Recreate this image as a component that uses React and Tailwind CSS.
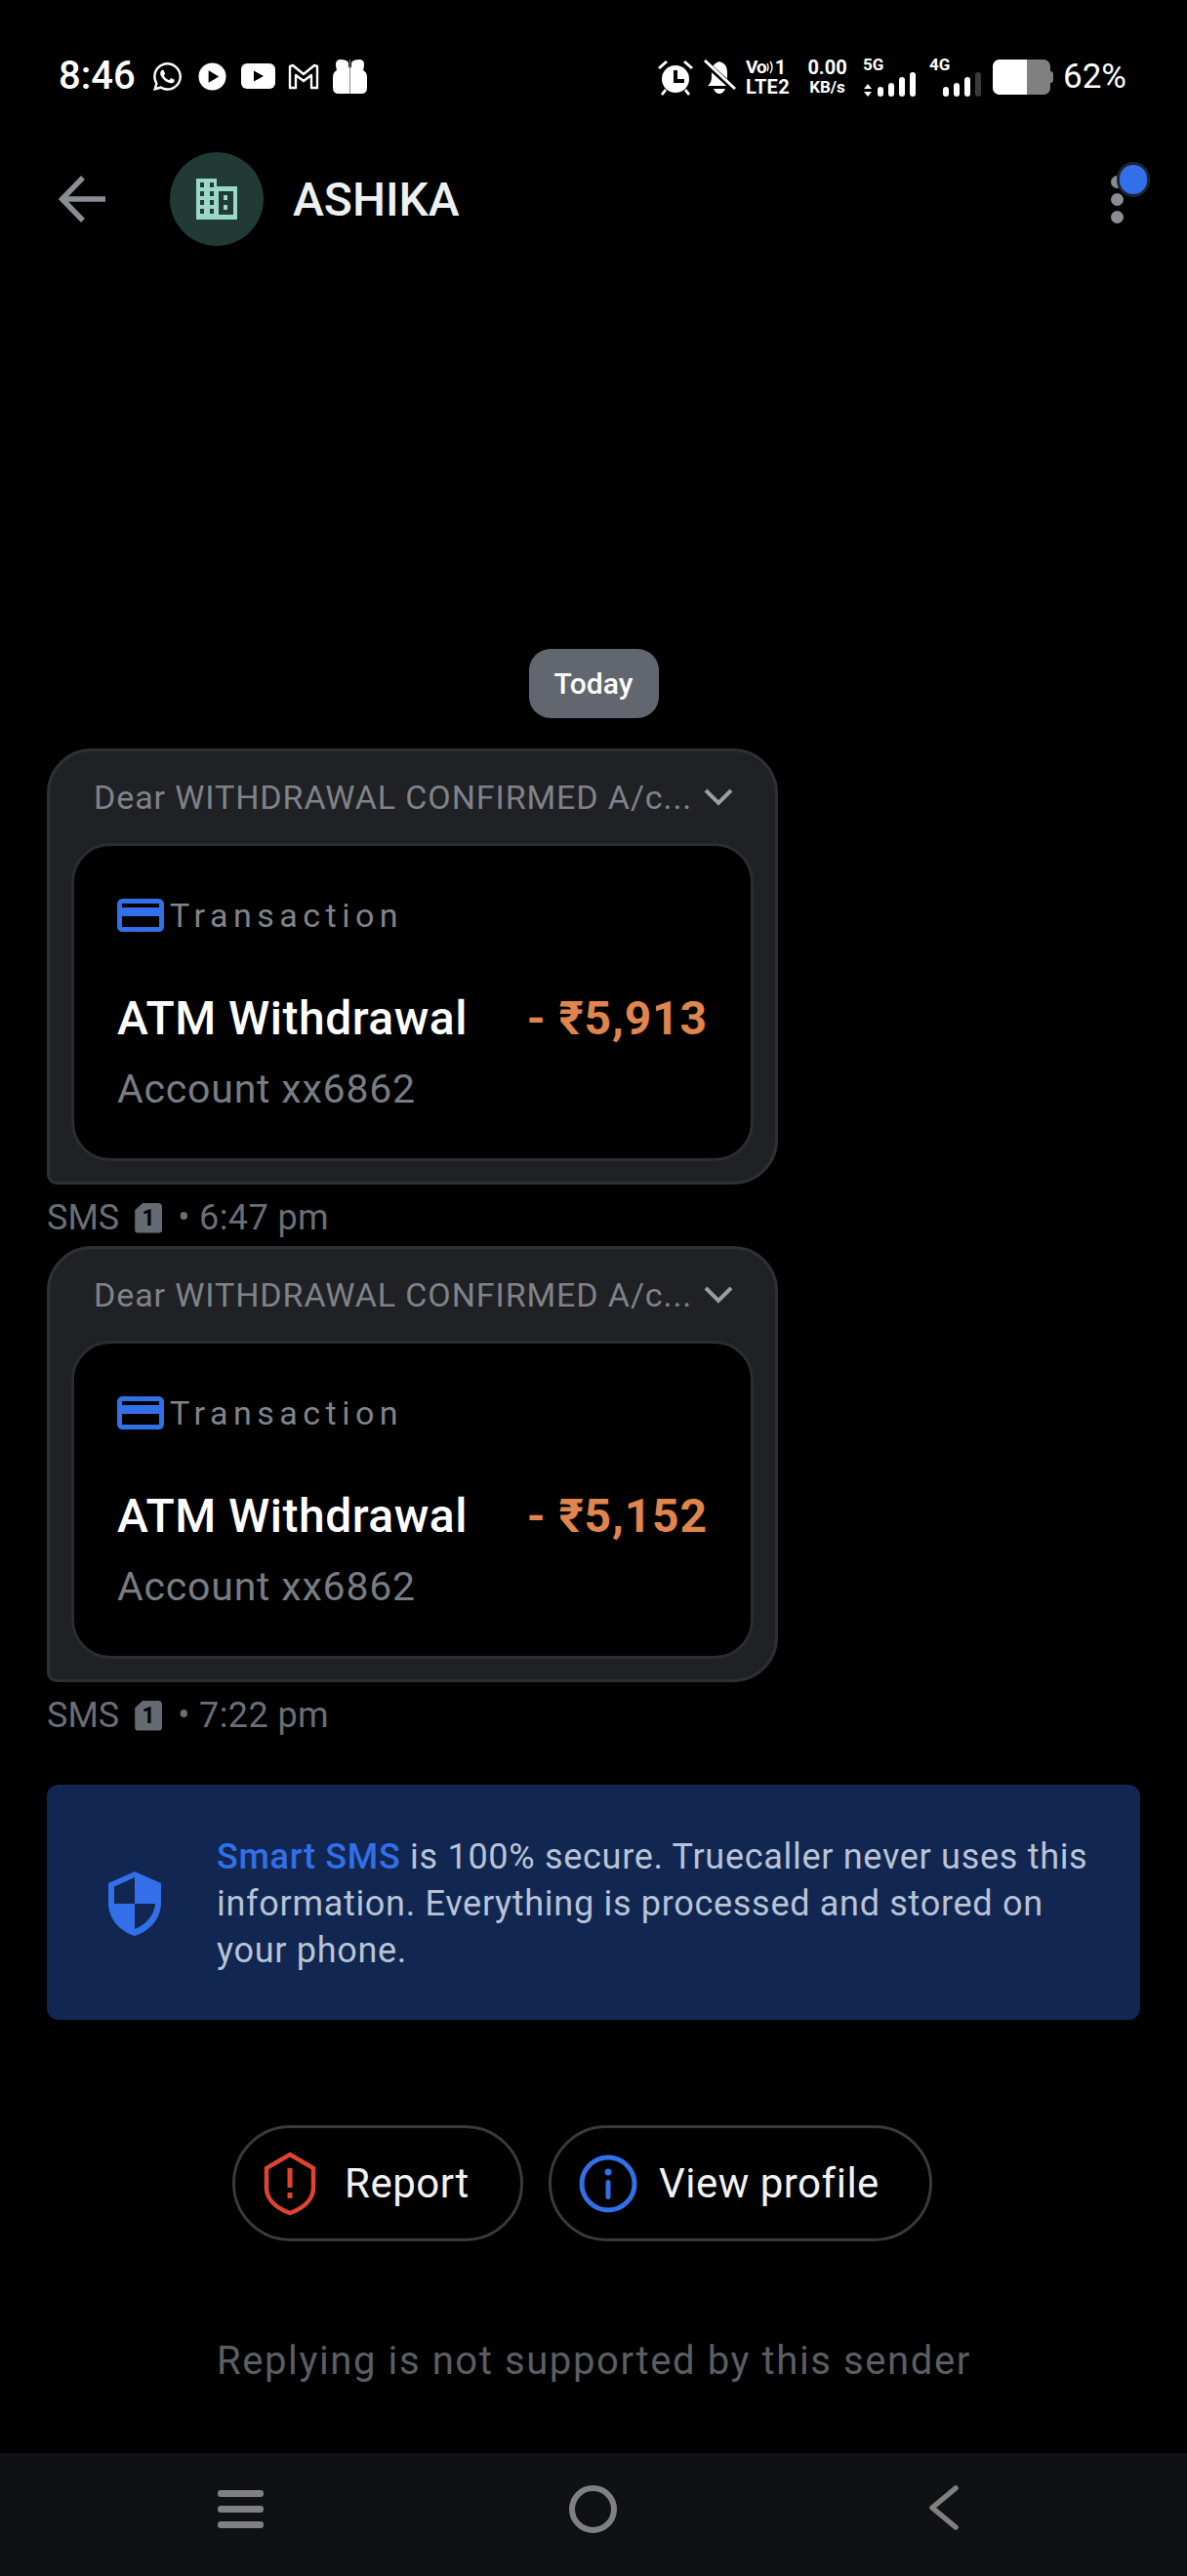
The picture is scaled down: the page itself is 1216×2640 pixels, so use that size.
import { FaWhatsapp } from 'react-icons/fa';

const font = { fontFamily: 'Roboto, sans-serif' };

function SignalBars({ dimLast }) {
  const bars = [10, 14, 20, 25];
  return (
    <div className="flex items-end gap-[5px]">
      {bars.map((h, i) => (
        <div
          key={i}
          className={`w-[6px] rounded-full ${dimLast && i === 3 ? 'bg-[#3a3a3a]' : 'bg-white'}`}
          style={{ height: h }}
        />
      ))}
    </div>
  );
}

function StatusBar() {
  return (
    <div className="h-[154px] flex items-start justify-between pl-[60px] pr-[62px] pt-[55px] text-white">
      <div className="flex items-center h-[46px]">
        <span className="text-[40px] leading-[46px] font-medium">8:46</span>
        <div className="flex items-center ml-[16px]">
          <FaWhatsapp className="text-[33px]" />
          <svg className="ml-[15px]" width="29" height="29" viewBox="0 0 30 30">
            <circle cx="15" cy="15" r="14.5" fill="#fff" />
            <path d="M11 8.500v13l11-6.500z" fill="#000" />
          </svg>
          <svg className="ml-[15px]" width="35" height="26" viewBox="0 0 35 26">
            <rect width="35" height="26" rx="6" fill="#fff" />
            <path d="M13 7.500v11l10-5.500z" fill="#000" />
          </svg>
          <svg className="ml-[13px]" width="32" height="27" viewBox="0 0 32 27" fill="none" stroke="#fff" strokeWidth="2.400" strokeLinejoin="round">
            <path d="M2 25V3l3-1 11 9L27 2l3 1v22h-6V12l-8 6-8-6v13z" />
          </svg>
          <svg className="ml-[14px]" width="35" height="35" viewBox="0 0 35 35">
            <path
              fill="#fff"
              d="M3 5q0-5 5-5 6 0 8 3v4l1 2v26H6q-6 0-6-6V18q0-5 4-7-1-3-1-6zM32 5q0-5-5-5-6 0-8 3v4l-1 2v26h11q6 0 6-6V18q0-5-4-7 1-3 1-6z"
            />
            <rect x="17" y="0" width="1" height="35" fill="#8a8a8a" />
          </svg>
        </div>
      </div>
      <div className="flex items-center h-[40px] mt-[4px]">
        <svg width="38" height="38" viewBox="0 0 38 38" fill="#fff">
          <circle cx="19" cy="21" r="14" />
          <path d="M17 12h4v9h7v4H17z" fill="#000" />
          <path d="m1 9 8-7 2 2-8 7zM37 9l-8-7-2 2 8 7zM4 36l4-5 2 2-4 5zM34 36l-4-5-2 2 4 5z" />
        </svg>
        <svg className="ml-[9px]" width="34" height="36" viewBox="0 0 34 36" fill="#fff">
          <path d="M5 27q4-3 4-9V13q0-9 8-11 8 2 8 11v5q0 6 5 9zM11 30h12q-2 5-6 5t-6-5z" />
          <path d="M0 1 33 31" stroke="#000" strokeWidth="6" />
          <path d="M2 1 33 30" stroke="#fff" strokeWidth="3" />
        </svg>
        <div className="ml-[10px] w-[44px] flex flex-col items-start font-bold">
          <div className="flex items-center h-[20px]">
            <span className="text-[19px] leading-[20px] tracking-[-1px]">Vo</span>
            <svg width="8" height="14" viewBox="0 0 8 14" fill="none" stroke="#fff" strokeWidth="1.400">
              <path d="M1 3q2 4 0 8M4 1q4 6 0 12" />
            </svg>
            <span className="ml-[1px] text-[20px] leading-[20px]">1</span>
          </div>
          <span className="text-[20px] leading-[20px] tracking-[0.3px]">LTE2</span>
        </div>
        <div className="ml-[18px] w-[43px] flex flex-col items-center font-bold">
          <span className="text-[20px] leading-[20px]">0.00</span>
          <span className="text-[17px] leading-[20px]">KB/s</span>
        </div>
        <div className="ml-[15px] w-[53px] flex flex-col items-start">
          <span className="text-[17px] leading-[15px] font-bold">5G</span>
          <div className="flex items-end gap-[5px] h-[25px]">
            <svg width="10" height="13" viewBox="0 0 10 13" fill="#fff">
              <path d="M5 0l4 5H1zM5 13l4-5H1z" />
            </svg>
            <SignalBars />
          </div>
        </div>
        <div className="ml-[15px] w-[53px] flex flex-col items-start">
          <span className="text-[17px] leading-[15px] font-bold">4G</span>
          <div className="pl-[14px]">
            <SignalBars dimLast />
          </div>
        </div>
        <div className="ml-[12px] flex items-center">
          <div className="w-[59px] h-[36px] rounded-[7px] overflow-hidden flex bg-[#808080]">
            <div className="w-[35px] bg-white" />
          </div>
          <div className="w-[3px] h-[12px] bg-[#808080] rounded-r-sm" />
        </div>
        <span className="ml-[10px] text-[35px] leading-[40px]">62%</span>
      </div>
    </div>
  );
}

function Header() {
  return (
    <div className="h-[100px] flex items-center pl-[60px] pr-[65px] relative">
      <svg width="48" height="48" viewBox="0 0 48 48" fill="none" stroke="#8a8d93" strokeWidth="5.500">
        <path d="M48 24H4M25 2 3.500 24 25 46" />
      </svg>
      <div className="ml-[66px] w-[96px] h-[96px] rounded-full bg-[#223a36] flex items-center justify-center">
        <svg width="42" height="42" viewBox="0 0 42 42">
          <path
            fill="#9bd8c9"
            fillRule="evenodd"
            d="M0 0h21v8h21v34H0zM4 4v5h4V4zm10 0v5h4V4zM4 13v5h4v-5zm10 0v5h4v-5zM4 22v5h4v-5zm10 0v5h4v-5zM4 31v5h4v-5zm10 0v5h4v-5zM23 13v24h15V13zm5 4h4v5h-4zm0 10h4v5h-4z"
          />
        </svg>
      </div>
      <span className="ml-[30px] mt-[1px] text-[48px] leading-[54px] font-medium text-[#eef0f0]">ASHIKA</span>
      <div className="ml-auto flex flex-col gap-[5px]">
        <div className="w-[13px] h-[13px] rounded-full bg-[#8a8d93]" />
        <div className="w-[13px] h-[13px] rounded-full bg-[#8a8d93]" />
        <div className="w-[13px] h-[13px] rounded-full bg-[#8a8d93]" />
      </div>
      {/* unread dot */}
      <div className="absolute right-[38px] top-[12px] w-[34px] h-[36px] rounded-full bg-[#326fe8] border-[3px] border-[#1d2530]" />
    </div>
  );
}

function TransactionBubble({ amount, time }) {
  return (
    <div className="ml-[48px]">
      <div className="w-[749px] h-[447px] bg-[#202125] border-[3px] border-[#2f3034] rounded-t-[46px] rounded-br-[46px] rounded-bl-[10px] px-[22px] pt-[24px]">
        <div className="h-[46px] flex items-center pl-[23px] justify-between pr-[21px]">
          <span className="text-[34px] tracking-[0.9px] text-[#7f8389] whitespace-nowrap">Dear WITHDRAWAL CONFIRMED A/c...</span>
          <svg width="30" height="20" viewBox="0 0 30 20" fill="none" stroke="#9a9da3" strokeWidth="4">
            <path d="m2 3 13 13L28 3" />
          </svg>
        </div>
        <div className="mt-[24px] h-[326px] bg-black border-[3px] border-[#2c2d30] rounded-[40px] pl-[44px] pr-[44px] pt-[52px]">
          <div className="flex items-center">
            <svg width="48" height="34" viewBox="0 0 48 34" fill="none">
              <rect x="2.500" y="2.500" width="43" height="29" rx="3" stroke="#326fe8" strokeWidth="5" />
              <rect x="2" y="9" width="44" height="9" fill="#326fe8" />
            </svg>
            <span className="ml-[6px] text-[34px] leading-[38px] tracking-[5.5px] text-[#80848b]">Transaction</span>
          </div>
          <div className="mt-[59px] flex items-center justify-between">
            <span className="text-[48px] leading-[56px] tracking-[0.5px] font-medium text-white">ATM Withdrawal</span>
            <span className="text-[48px] leading-[56px] tracking-[0.9px] font-bold text-[#e0854d] whitespace-nowrap">- ₹{amount}</span>
          </div>
          <div className="mt-[21px] text-[41px] leading-[46px] tracking-[0.8px] text-[#787c83]">Account xx6862</div>
        </div>
      </div>
      <div className="h-[63px] flex items-center pt-[5px] text-[36px] text-[#6a6e75]">
        <span>SMS</span>
        <span className="ml-[16px] w-[28px] h-[31px] rounded-[4px] [clip-path:polygon(30%_0,100%_0,100%_100%,0_100%,0_25%)] bg-[#666a72] flex items-center justify-center text-[23px] leading-none font-bold text-black">
          1
        </span>
        <span className="ml-[16px] tracking-[0.4px]">• {time}</span>
      </div>
    </div>
  );
}

function SecureBanner() {
  return (
    <div className="mx-[48px] mt-[42px] h-[241px] rounded-[12px] bg-[#112751] flex items-center">
      <svg className="ml-[63px] mt-[2px] shrink-0" width="54" height="66" viewBox="0 0 54 66">
        <path
          fill="#326fe8"
          fillRule="evenodd"
          d="M27 0 54 12v20c0 16-11 29-27 34C11 61 0 48 0 32V12zm0 6L6 15.500V33h21zm0 27v26c11-4 20-14 21-26z"
        />
      </svg>
      <p className="ml-[57px] mt-[3px] text-[36px] leading-[48px] tracking-[0.7px] text-[#b9c3d6] w-[910px]">
        <span className="font-medium text-[#326fe8]">Smart SMS</span> is 100% secure. Truecaller never uses this
        information. Everything is processed and stored on your phone.
      </p>
    </div>
  );
}

function ActionButtons() {
  return (
    <div className="mt-[108px] flex pl-[238px] gap-[26px]">
      <div className="w-[298px] h-[119px] rounded-full border-[3px] border-[#3a3a3a] flex items-center pl-[29px]">
        <svg width="54" height="66" viewBox="0 0 54 66" fill="none">
          <path d="M27 3 51 17v20c0 12-10 21-24 26C13 58 3 49 3 37V17z" stroke="#e0432f" strokeWidth="4.500" />
          <path d="M24.500 17h5v20h-5zM24.500 42h5v6h-5z" fill="#e0432f" />
        </svg>
        <span className="ml-[29px] text-[42px] leading-[48px] tracking-[0.5px] text-[#f2f2f2]">Report</span>
      </div>
      <div className="w-[393px] h-[119px] rounded-full border-[3px] border-[#3a3a3a] flex items-center pl-[28px]">
        <svg width="60" height="60" viewBox="0 0 60 60" fill="none">
          <circle cx="30" cy="30" r="27" stroke="#326fe8" strokeWidth="5" />
          <circle cx="30" cy="18" r="3.500" fill="#326fe8" />
          <rect x="27.500" y="26" width="5" height="20" rx="2.500" fill="#326fe8" />
        </svg>
        <span className="ml-[22px] text-[42px] leading-[48px] tracking-[0.5px] text-[#f2f2f2]">View profile</span>
      </div>
    </div>
  );
}

function NavBar() {
  return (
    <div className="h-[126px] bg-[#0f1115] flex items-start pl-[223px] pt-[33px]">
      <div className="flex flex-col gap-[9px] w-[47px] mt-[5px]">
        <div className="h-[7px] rounded-[3px] bg-[#808080]" />
        <div className="h-[7px] rounded-[3px] bg-[#808080]" />
        <div className="h-[7px] rounded-[3px] bg-[#808080]" />
      </div>
      <div className="ml-[313px] w-[49px] h-[49px] rounded-full border-[6px] border-[#808080]" />
      <svg className="ml-[320px]" width="30" height="46" viewBox="0 0 30 46" fill="none" stroke="#808080" strokeWidth="5.500" strokeLinecap="round" strokeLinejoin="round">
        <path d="M27 3 3 23l24 20" />
      </svg>
    </div>
  );
}

export default function App() {
  return (
    <div className="w-[1216px] h-[2640px] bg-black flex flex-col overflow-hidden" style={font}>
      <StatusBar />
      <Header />
      <div className="mt-[411px] flex justify-center">
        <div className="w-[133px] h-[71px] rounded-[22px] bg-[#62666e] flex items-center justify-center text-[30px] font-medium text-white">
          Today
        </div>
      </div>
      <div className="mt-[31px]">
        <TransactionBubble amount="5,913" time="6:47 pm" />
      </div>
      <TransactionBubble amount="5,152" time="7:22 pm" />
      <SecureBanner />
      <ActionButtons />
      <div className="mt-[100px] pl-[222px] text-[40px] leading-[46px] tracking-[1.6px] text-[#5b5e63]">
        Replying is not supported by this sender
      </div>
      <div className="mt-auto">
        <NavBar />
      </div>
    </div>
  );
}
